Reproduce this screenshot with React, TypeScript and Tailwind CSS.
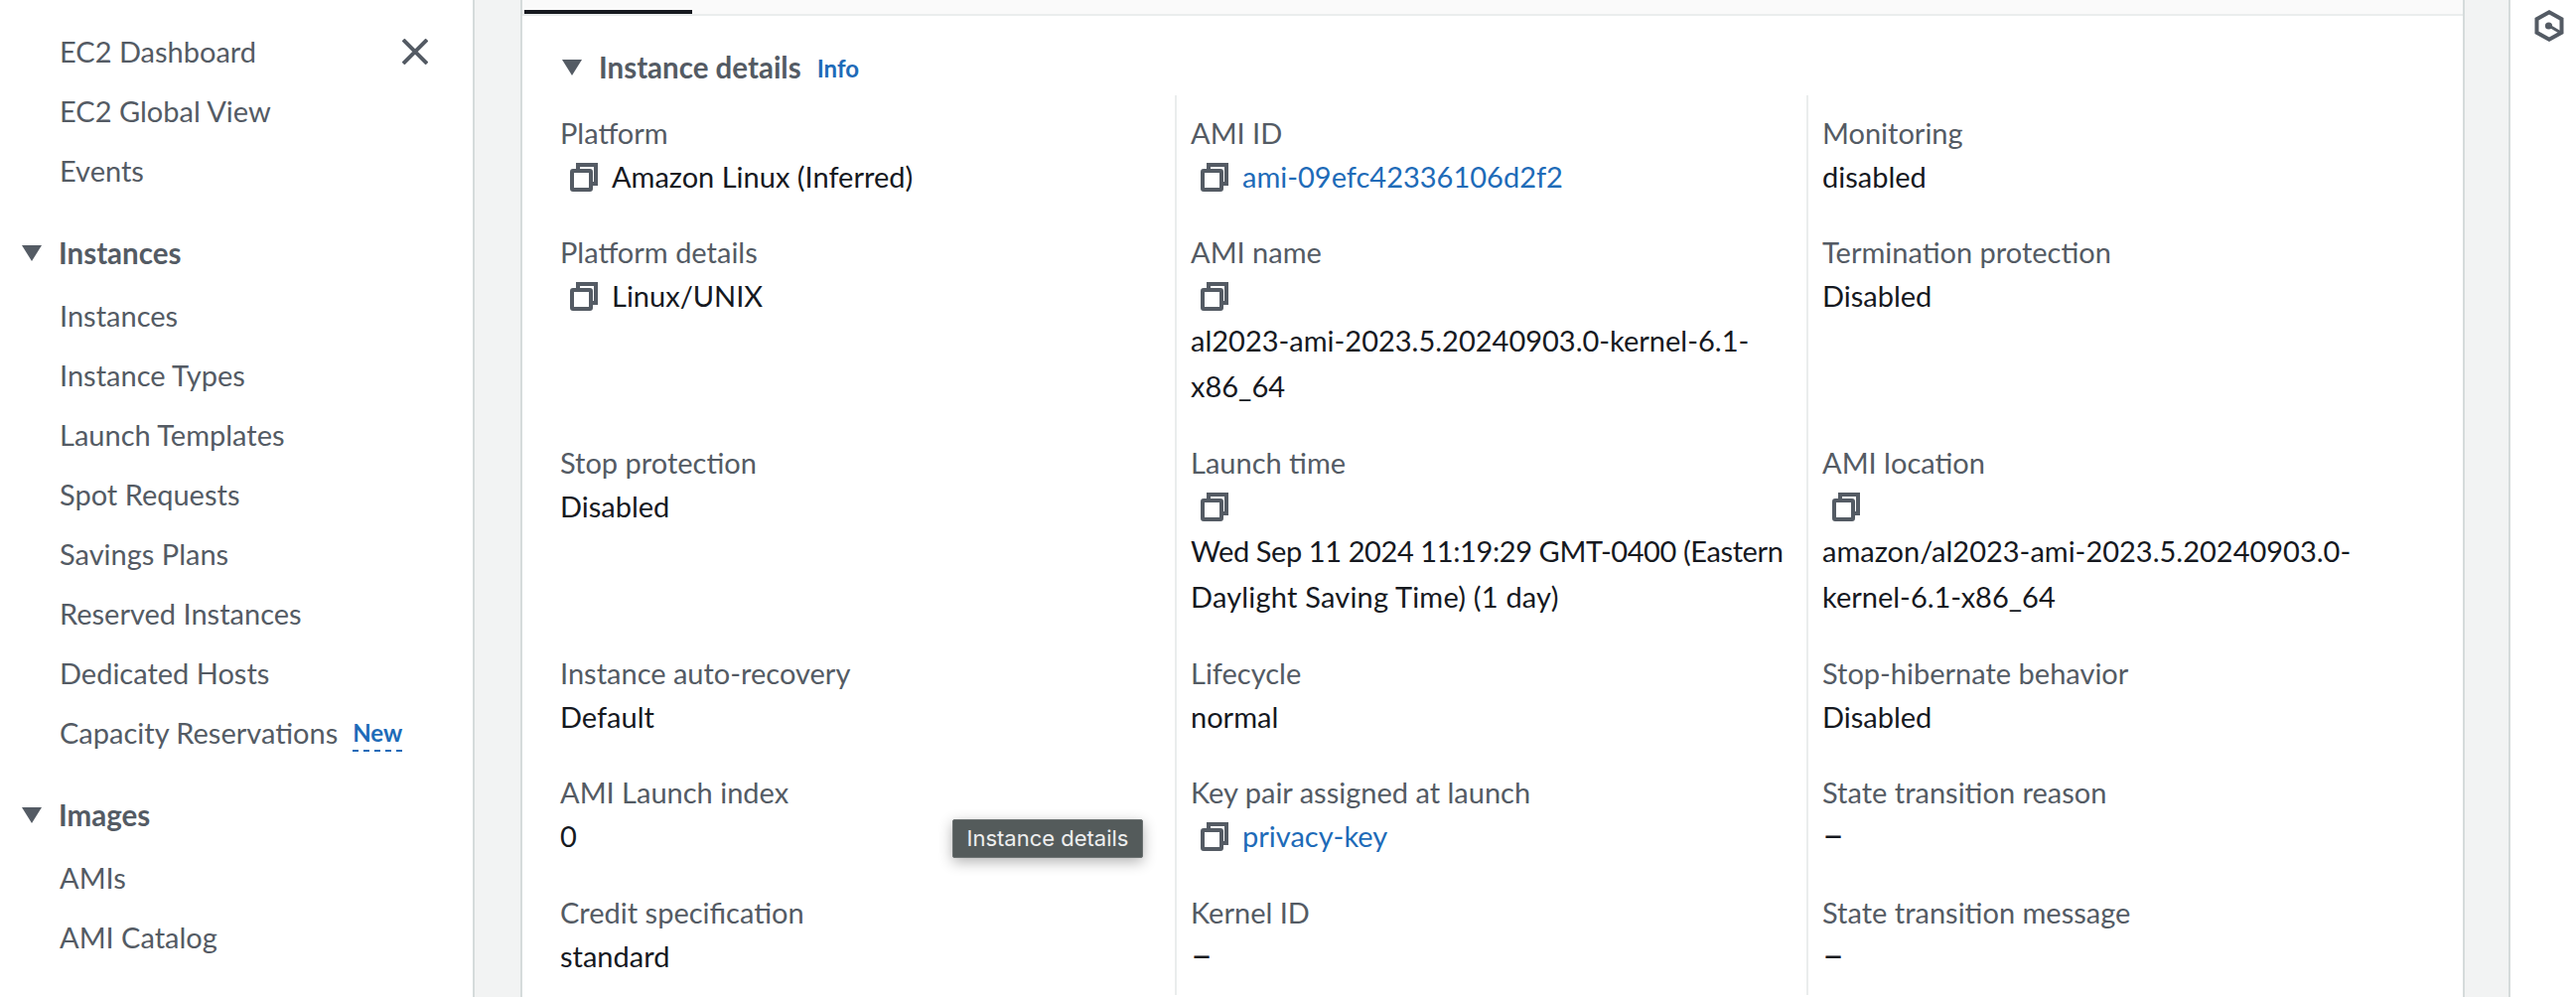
import React from "react";

function CopyIcon() {
  return (
    <svg width="30" height="30" viewBox="0 0 30 30" fill="none" stroke="#545b64" strokeWidth="4" className="shrink-0">
      <path d="M9 8V3h18v19h-5" />
      <rect x="3" y="9" width="19" height="19" rx="1" />
    </svg>
  );
}

function Caret({ className }: { className: string }) {
  return <span className={`w-[20px] h-[16px] bg-[#545b64] shrink-0 [clip-path:polygon(0_0,100%_0,50%_100%)] ${className}`} />;
}

function NavItem({ label, badge }: { label: string; badge?: boolean }) {
  return (
    <div className="h-[60px] flex items-center pl-[60px] text-[#545b64]">
      {label}
      {badge && (
        <span className="ml-[15px] mt-[2px] text-[#1e6bb8] font-bold text-[24px] leading-[34px] border-b-2 border-dashed border-[#1e6bb8]">New</span>
      )}
    </div>
  );
}

function NavHeading({ label }: { label: string }) {
  return (
    <div className="h-[60px] mt-[23px] mb-[3px] flex items-center pl-[22px] font-bold text-[29.5px] text-[#545b64]">
      <Caret className="mr-[17px]" />
      {label}
    </div>
  );
}

type Field = {
  label: string;
  value: string;
  copy?: boolean;
  link?: boolean;
  block?: { text: string; track?: string }[];
};

const fields: Field[] = [
  { label: "Platform", value: "Amazon Linux (Inferred)", copy: true },
  { label: "AMI ID", value: "ami-09efc42336106d2f2", copy: true, link: true },
  { label: "Monitoring", value: "disabled" },
  { label: "Platform details", value: "Linux/UNIX", copy: true },
  { label: "AMI name", value: "", copy: true, block: [{ text: "al2023-ami-2023.5.20240903.0-kernel-6.1-" }, { text: "x86_64" }] },
  { label: "Termination protection", value: "Disabled" },
  { label: "Stop protection", value: "Disabled" },
  {
    label: "Launch time",
    value: "",
    copy: true,
    block: [
      { text: "Wed Sep 11 2024 11:19:29 GMT-0400 (Eastern", track: "tracking-[-0.4px]" },
      { text: "Daylight Saving Time) (1 day)", track: "tracking-[0.2px]" },
    ],
  },
  { label: "AMI location", value: "", copy: true, block: [{ text: "amazon/al2023-ami-2023.5.20240903.0-" }, { text: "kernel-6.1-x86_64" }] },
  { label: "Instance auto-recovery", value: "Default" },
  { label: "Lifecycle", value: "normal" },
  { label: "Stop-hibernate behavior", value: "Disabled" },
  { label: "AMI Launch index", value: "0" },
  { label: "Key pair assigned at launch", value: "privacy-key", copy: true, link: true },
  { label: "State transition reason", value: "–" },
  { label: "Credit specification", value: "standard" },
  { label: "Kernel ID", value: "–" },
  { label: "State transition message", value: "–" },
];

function FieldCell({ field, index }: { field: Field; index: number }) {
  return (
    <div className={`py-4 leading-[44px] ${index % 3 === 0 ? "" : "border-l-2 border-[#eaeded] pl-[14px]"}`}>
      <div className="text-[#545b64]">{field.label}</div>
      {field.copy ? (
        <div className="h-[44px] flex items-center pl-[9px]">
          <CopyIcon />
          {field.value && <span className={`ml-[13px] ${field.link ? "text-[#1e6bb8]" : "text-[#16191f]"}`}>{field.value}</span>}
        </div>
      ) : (
        <div className="text-[#16191f]">
          {field.value === "–" ? <span className="text-[38px] leading-none">–</span> : field.value}
        </div>
      )}
      {field.block && field.block.map((line) => (
        <div key={line.text} className={`text-[#16191f] leading-[46px] whitespace-nowrap ${line.track ?? ""}`}>{line.text}</div>
      ))}
    </div>
  );
}

export default function App() {
  return (
    <div className="w-[2594px] h-[1004px] flex overflow-hidden bg-white text-[29px] font-['Lato','Noto_Sans',sans-serif]">
      <aside className="w-[478px] shrink-0 relative border-r-2 border-[#d5dbdb] pt-[22px]">
        <svg width="26" height="26" viewBox="0 0 26 26" stroke="#545b64" strokeWidth="4" className="absolute left-[405px] top-[39px]">
          <path d="M1 1l24 24M25 1L1 25" />
        </svg>
        <NavItem label="EC2 Dashboard" />
        <NavItem label="EC2 Global View" />
        <NavItem label="Events" />
        <NavHeading label="Instances" />
        <NavItem label="Instances" />
        <NavItem label="Instance Types" />
        <NavItem label="Launch Templates" />
        <NavItem label="Spot Requests" />
        <NavItem label="Savings Plans" />
        <NavItem label="Reserved Instances" />
        <NavItem label="Dedicated Hosts" />
        <NavItem label="Capacity Reservations" badge />
        <NavHeading label="Images" />
        <NavItem label="AMIs" />
        <NavItem label="AMI Catalog" />
      </aside>

      <main className="flex-1 bg-[#f2f3f3] pl-[46px] pr-[44px]">
        <div className="relative h-full bg-white border-x-2 border-[#d5dbdb]">
          <div className="h-[16px] bg-[#fafafa] border-b-2 border-[#eaeded] flex items-end">
            <div className="w-[169px] h-[4px] ml-[2px] bg-[#16191f]" />
          </div>
          <div className="pl-[38px] pr-[26px]">
            <div className="h-[44px] mt-[30px] mb-[6px] flex items-center">
              <Caret className="ml-[2px] mr-[17px]" />
              <span className="font-bold text-[29.5px] text-[#545b64]">Instance details</span>
              <span className="ml-[16px] mt-[2px] text-[#1e6bb8] font-bold text-[24px]">Info</span>
            </div>
            <div className="grid grid-cols-[619px_636px_1fr]">
              {fields.map((field, i) => (
                <FieldCell key={field.label} field={field} index={i} />
              ))}
            </div>
          </div>
          <div className="absolute left-[433px] top-[825px] w-[192px] h-[39px] flex items-center justify-center bg-[#545b5b] border border-[#6b7171] rounded-[2px] text-white/90 text-[22px] font-['Inter',sans-serif] shadow-[0_4px_14px_rgba(0,0,0,0.3)]">
            Instance details
          </div>
        </div>
      </main>

      <aside className="w-[68px] shrink-0 border-l-2 border-[#d5dbdb] pl-[24px] pt-[10px]">
        <svg width="30" height="32" viewBox="0 0 30 32" fill="none" stroke="#545b64" strokeWidth="4">
          <path d="M15 2.3L27.5 9.2v13.6L15 29.7 2.5 22.8V9.2z" />
          <circle cx="14.5" cy="16" r="3.6" fill="#545b64" stroke="none" />
          <path d="M15 16l11 6.5" strokeWidth="3" />
        </svg>
      </aside>
    </div>
  );
}
